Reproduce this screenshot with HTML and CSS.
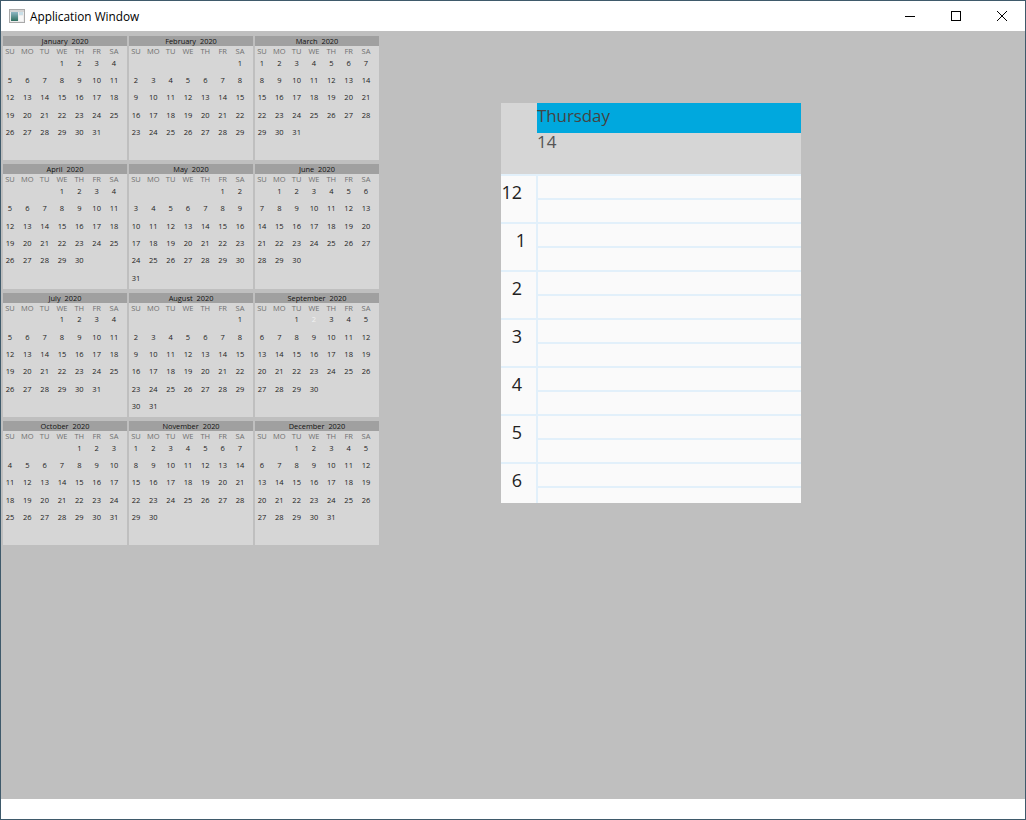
FILE: index.html
```html
<!DOCTYPE html>
<html>
<head>
<meta charset="utf-8">
<title>Application Window</title>
<link rel="stylesheet" href="styles.css">
</head>
<body>
<div class="window">
	<div class="titlebar">
		<svg class="appicon" width="16" height="14" viewBox="0 0 16 14">
			<defs>
				<linearGradient id="iconfill" x1="0" y1="0" x2="0" y2="1">
					<stop offset="0" stop-color="#8fb7c4"/>
					<stop offset="1" stop-color="#2f6f5f"/>
				</linearGradient>
			</defs>
			<rect x="0.5" y="0.5" width="15" height="13" fill="#ececec" stroke="#a9a9a9"/>
			<rect x="1" y="1" width="14" height="2" fill="#d4d4d4"/>
			<rect x="2" y="3" width="7" height="9" fill="url(#iconfill)"/>
			<rect x="10" y="3" width="4" height="3" fill="#c9dfe8"/>
			<rect x="10" y="7" width="4" height="5" fill="#f7f7f7"/>
		</svg>
		<span class="title">Application Window</span>
		<div class="winbtns">
			<svg class="winbtn" width="46" height="30" viewBox="0 0 46 30"><path d="M18 15.5h10" stroke="#000" fill="none"/></svg>
			<svg class="winbtn" width="46" height="30" viewBox="0 0 46 30"><rect x="18.5" y="10.5" width="9" height="9" stroke="#000" fill="none"/></svg>
			<svg class="winbtn" width="46" height="30" viewBox="0 0 46 30"><path d="M18 10l10 10M28 10l-10 10" stroke="#000" fill="none"/></svg>
		</div>
	</div>
	<div class="content">
		<div class="year" id="year"></div>
		<div class="dayview">
			<div class="dayhead">
				<div class="daycorner"></div>
				<div class="daytitle">
					<div class="dayname">Thursday</div>
					<div class="daynum">14</div>
				</div>
			</div>
			<div class="hour"><div class="hournum">12</div><div class="slots"><div class="slot"></div><div class="slot"></div></div></div>
			<div class="hour"><div class="hournum one">1</div><div class="slots"><div class="slot"></div><div class="slot"></div></div></div>
			<div class="hour"><div class="hournum">2</div><div class="slots"><div class="slot"></div><div class="slot"></div></div></div>
			<div class="hour"><div class="hournum">3</div><div class="slots"><div class="slot"></div><div class="slot"></div></div></div>
			<div class="hour"><div class="hournum">4</div><div class="slots"><div class="slot"></div><div class="slot"></div></div></div>
			<div class="hour"><div class="hournum">5</div><div class="slots"><div class="slot"></div><div class="slot"></div></div></div>
			<div class="hour"><div class="hournum">6</div><div class="slots"><div class="slot"></div><div class="slot"></div></div></div>
		</div>
	</div>
	<div class="footer"></div>
</div>
<script src="calendar.js"></script>
</body>
</html>
```

FILE: styles.css
```css
html, body{margin:0; padding:0;}
body{width:1026px; height:820px; overflow:hidden; font-family:"Open Sans","Liberation Sans",sans-serif;}
.window{width:1026px; height:820px; box-sizing:border-box; border:1px solid #3f5a6b; display:flex; flex-direction:column; background:#fff;}

.titlebar{height:30px; display:flex; align-items:center; background:#fff; flex:none;}
.appicon{margin-left:8px;}
.title{margin-left:5px; font-size:11.8px; color:#000;}
.winbtns{margin-left:auto; display:flex;}
.winbtn{display:block;}

.content{flex:1; background:#bfbfbf; display:flex; align-items:flex-start; padding:5px 0 0 2px;}
.footer{height:20px; flex:none; background:#fff;}

.year{width:376px; display:grid; grid-template-columns:repeat(3,124px); grid-auto-rows:124.33px; column-gap:2px; row-gap:4px;}
.month{background:#d6d6d6;}
.monthname{height:10px; line-height:10px; background:#a0a0a0; text-align:center; font-size:7.4px; color:#111; word-spacing:2px;}
.days{display:grid; grid-template-columns:repeat(7,17.33px); grid-template-rows:8.67px; grid-auto-rows:17.33px; font-size:7.5px; color:#222;}
.days span{box-sizing:border-box; padding-right:3.33px; text-align:center; line-height:17.33px;}
.days .dow{line-height:10px; color:#707070;}
.days .today{color:#f2f2f2;}

.dayview{width:300px; height:400px; overflow:hidden; margin:67px 0 0 122px; background:#fafafa;}
.dayhead{display:flex; height:71px; background:#d6d6d6;}
.daycorner{width:36px;}
.daytitle{flex:1;}
.dayname{height:30px; line-height:26px; background:#00a8de; font-size:17px; letter-spacing:-0.1px; color:#444;}
.daynum{font-size:17px; line-height:18px; color:#555;}
.hour{display:flex; height:48px; box-sizing:border-box; border-top:2px solid #e2f0fa;}
.hournum{width:35px; box-sizing:border-box; padding:3px 14px 0 0; text-align:right; font-size:18px; line-height:26px; color:#222;}
.hournum.one{padding-right:10px;}
.slots{flex:1; border-left:2px solid #e2f0fa;}
.slot{height:22px;}
.slot + .slot{height:24px; border-top:2px solid #e2f0fa;}
```

FILE: calendar.js
```js
var oYear=document.getElementById("year");
var aMonth=["January","February","March","April","May","June","July","August","September","October","November","December"];
var aDow=["SU","MO","TU","WE","TH","FR","SA"];

for(var m=0; m<12; m++){
	var first=new Date(2020, m, 1).getDay();
	var count=new Date(2020, m+1, 0).getDate();
	var html='<div class="monthname">'+aMonth[m]+' 2020</div><div class="days">';
	for(var i=0; i<7; i++){
		html+='<span class="dow">'+aDow[i]+'</span>';
	}
	for(var i=0; i<first; i++){
		html+='<span></span>';
	}
	for(var d=1; d<=count; d++){
		html+=(m==8 && d==2) ? '<span class="today">'+d+'</span>' : '<span>'+d+'</span>';
	}
	html+='</div>';
	var oDiv=document.createElement("div");
	oDiv.className="month";
	oDiv.innerHTML=html;
	oYear.appendChild(oDiv);
}
```
